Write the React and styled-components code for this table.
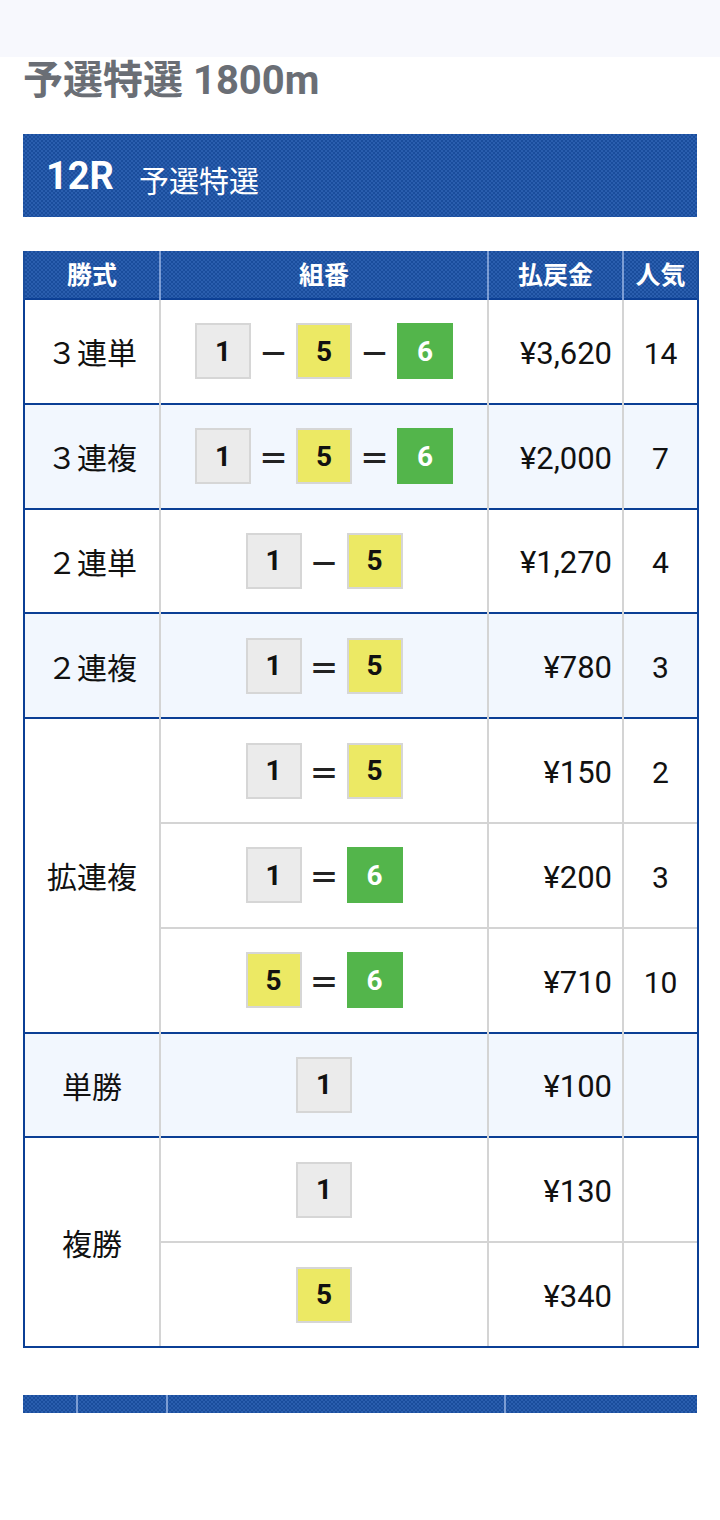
import React from 'react'
import styled, { createGlobalStyle } from 'styled-components'

const BLUE = '#0b3f95'
const GRAY = '#d4d4d4'
const DIVIDER = '#7c9dd4'

const checker = `
  background-color: #1a4d9c;
  background-image: repeating-conic-gradient(#2a5eae 0 25%, transparent 0 50%);
  background-size: 4px 4px;
`

const GlobalStyle = createGlobalStyle`
  body {
    margin: 0;
    background: #fff;
    font-family: Roboto, "Noto Sans CJK JP", sans-serif;
    color: #111;
  }
`

const TopBar = styled.div`
  height: 57px;
  background: #f7f8fd;
`

const Content = styled.div`
  padding: 0 23px;
`

const Title = styled.h1`
  margin: 0 0 29px;
  font-size: 40px;
  line-height: 48px;
  font-weight: 700;
  color: #6a6e75;
`

const RaceHeader = styled.div`
  ${checker}
  height: 83px;
  display: flex;
  align-items: center;
  padding-left: 23px;
  gap: 25px;
  color: #fff;
  margin-bottom: 34px;
`

const RaceNo = styled.span`
  font-size: 38px;
  font-weight: 700;
`

const RaceName = styled.span`
  font-size: 30px;
  padding-top: 6px;
  font-family: "Noto Sans CJK JP", sans-serif;
`

const Table = styled.table`
  width: 100%;
  table-layout: fixed;
  border-collapse: collapse;
`

const Th = styled.th`
  ${checker}
  height: 43px;
  padding: 0 0 4px;
  color: #fff;
  font-size: 25px;
  font-weight: 700;
  font-family: "Noto Sans CJK JP", sans-serif;
  border-left: 2px solid ${p => (p.$first ? '#1a4d9c' : DIVIDER)};
  border-right: ${p => (p.$last ? '2px solid #1a4d9c' : 'none')};
`

const Td = styled.td`
  height: 102.8px;
  padding: 0;
  font-size: 30px;
  background: ${p => (p.$alt ? '#f2f7fe' : '#fff')};
  border-top: 2px solid ${p => (p.$groupStart ? BLUE : GRAY)};
  border-left: 2px solid ${GRAY};
  border-bottom: ${p => (p.$lastRow ? `2px solid ${BLUE}` : 'none')};
`

const TypeCell = styled(Td)`
  text-align: center;
  border-left: 2px solid ${BLUE};
  font-family: "Noto Sans CJK JP", sans-serif;
`

const PayCell = styled(Td)`
  height: 98.8px;
  text-align: right;
  padding: 4px 10px 0 0;
  font-size: 31px;
`

const PopCell = styled(Td)`
  height: 98.8px;
  text-align: center;
  padding-top: 4px;
  border-right: 2px solid ${BLUE};
`

const Combo = styled.div`
  display: flex;
  align-items: center;
  justify-content: center;
`

const Boat = styled.span`
  box-sizing: border-box;
  width: 56px;
  height: 56px;
  display: inline-flex;
  align-items: center;
  justify-content: center;
  font-size: 28px;
  font-weight: 700;
  background: ${p => p.$bg};
  color: ${p => p.$fg};
  border: 2px solid ${p => p.$border};
`

const Sep = styled.span`
  width: 45px;
  text-align: center;
  font-size: 30px;
  font-weight: 700;
  font-family: "Noto Sans CJK JP", sans-serif;
  color: #222;
`

const NextHead = styled.div`
  ${checker}
  height: 18px;
  margin-top: 47px;
  display: grid;
  grid-template-columns: 53px 90px 338px 1fr;
`

const NextCol = styled.div`
  border-left: ${p => (p.$first ? 'none' : `2px solid ${DIVIDER}`)};
`

const boatColors = {
  1: { bg: '#ebebeb', fg: '#111', border: '#d6d6d6' },
  5: { bg: '#ece964', fg: '#111', border: '#d6d6d6' },
  6: { bg: '#53b54b', fg: '#fff', border: '#53b54b' },
}

const results = [
  { type: '３連単', items: [{ combo: [1, 5, 6], sep: '－', pay: '¥3,620', pop: '14' }] },
  { type: '３連複', items: [{ combo: [1, 5, 6], sep: '＝', pay: '¥2,000', pop: '7' }] },
  { type: '２連単', items: [{ combo: [1, 5], sep: '－', pay: '¥1,270', pop: '4' }] },
  { type: '２連複', items: [{ combo: [1, 5], sep: '＝', pay: '¥780', pop: '3' }] },
  {
    type: '拡連複',
    items: [
      { combo: [1, 5], sep: '＝', pay: '¥150', pop: '2' },
      { combo: [1, 6], sep: '＝', pay: '¥200', pop: '3' },
      { combo: [5, 6], sep: '＝', pay: '¥710', pop: '10' },
    ],
  },
  { type: '単勝', items: [{ combo: [1], pay: '¥100', pop: '' }] },
  {
    type: '複勝',
    items: [
      { combo: [1], pay: '¥130', pop: '' },
      { combo: [5], pay: '¥340', pop: '' },
    ],
  },
]

const BoatCombo = ({ combo, sep }) => (
  <Combo>
    {combo.map((n, i) => {
      const c = boatColors[n]
      return (
        <React.Fragment key={i}>
          {i > 0 && <Sep>{sep}</Sep>}
          <Boat $bg={c.bg} $fg={c.fg} $border={c.border}>{n}</Boat>
        </React.Fragment>
      )
    })}
  </Combo>
)

export default function App() {
  return (
    <>
      <GlobalStyle />
      <TopBar />
      <Content>
        <Title>予選特選 1800m</Title>
        <RaceHeader>
          <RaceNo>12R</RaceNo>
          <RaceName>予選特選</RaceName>
        </RaceHeader>
        <Table>
          <colgroup>
            <col style={{ width: 136 }} />
            <col style={{ width: 328 }} />
            <col style={{ width: 135 }} />
            <col style={{ width: 75 }} />
          </colgroup>
          <thead>
            <tr>
              <Th $first>勝式</Th>
              <Th>組番</Th>
              <Th>払戻金</Th>
              <Th $last>人気</Th>
            </tr>
          </thead>
          <tbody>
            {results.map((group, gi) => {
              const alt = gi % 2 === 1
              const lastGroup = gi === results.length - 1
              return group.items.map((item, ii) => {
                const first = ii === 0
                const lastRow = lastGroup && ii === group.items.length - 1
                return (
                  <tr key={`${gi}-${ii}`}>
                    {first && (
                      <TypeCell
                        rowSpan={group.items.length}
                        $alt={alt}
                        $groupStart
                        $lastRow={lastGroup}
                      >
                        {group.type}
                      </TypeCell>
                    )}
                    <Td $alt={alt} $groupStart={first} $lastRow={lastRow}>
                      <BoatCombo combo={item.combo} sep={item.sep} />
                    </Td>
                    <PayCell $alt={alt} $groupStart={first} $lastRow={lastRow}>
                      {item.pay}
                    </PayCell>
                    <PopCell $alt={alt} $groupStart={first} $lastRow={lastRow}>
                      {item.pop}
                    </PopCell>
                  </tr>
                )
              })
            })}
          </tbody>
        </Table>
        <NextHead>
          <NextCol $first />
          <NextCol />
          <NextCol />
          <NextCol />
        </NextHead>
      </Content>
    </>
  )
}
